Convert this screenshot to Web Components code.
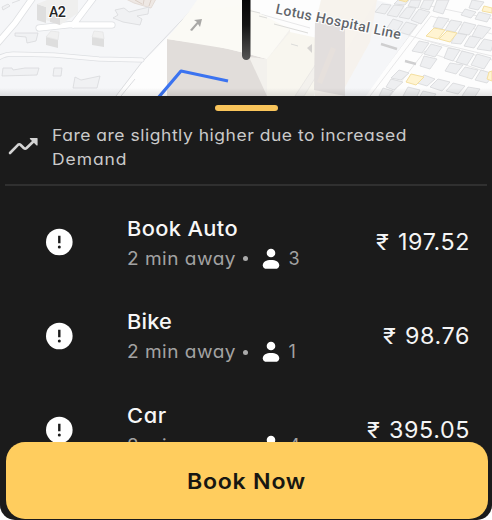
<!DOCTYPE html>
<html lang="en"><head><meta charset="utf-8"><title>Book a ride</title>
<style>html,body{margin:0;background:#fff}body{width:492px;height:520px;overflow:hidden;font-family:Inter,"Open Sans",sans-serif;font-feature-settings:"cv11"}</style></head>
<body><ride-app></ride-app>
<script>
const define=(name,html,init)=>customElements.define(name,class extends HTMLElement{
  connectedCallback(){
    if(this.shadowRoot)return;
    const t=document.createElement('template');t.innerHTML=html;
    this.attachShadow({mode:'open'}).append(t.content.cloneNode(true));
    if(init)init(this,this.shadowRoot);
  }
});

/* Slightly widened text whose tracking is set so that the line is `w` pixels wide */
const STRETCH=1.06;
function fit(h){
  const s=h.shadowRoot.querySelector('span'),w=+h.getAttribute('w'),n=h.textContent.length;
  const k=+(h.getAttribute('stretch')||STRETCH);
  s.style.transform='none';s.style.letterSpacing='0px';
  s.style.letterSpacing=((w/k-s.getBoundingClientRect().width)/n)+'px';
  s.style.transform='scaleX('+k+')';
  h.style.width=w+'px';
}
define('fit-text',`<style>:host{display:block;white-space:nowrap}span{display:inline-block;transform-origin:0 50%}</style><span><slot></slot></span>`,h=>fit(h));

define('ride-map',`<style>:host{display:block;height:96px;overflow:hidden}svg{display:block}text{font-family:Roboto,sans-serif}</style>
<svg width="492" height="96" viewBox="0 0 492 96">
<defs>
<linearGradient id="pin" x1="0" x2="0" y1="0" y2="1"><stop offset="0" stop-color="#000"/><stop offset=".5" stop-color="#141414"/><stop offset="1" stop-color="#555"/></linearGradient>
<linearGradient id="sh" x1="0" x2="0" y1="0" y2="1"><stop offset="0" stop-color="#000" stop-opacity="0"/><stop offset="1" stop-color="#000" stop-opacity=".1"/></linearGradient>
</defs>
<rect width="492" height="96" fill="#f5f6f8"/>
<path d="M204 0H492V96H116L142 63 204 0Z" fill="#fdfdfd"/>
<path d="M116 96 142 62 201 0" fill="none" stroke="#dcdde0"/>
<path d="M121 96 135 79" stroke="#dcdde0" fill="none"/>
<g fill="none" stroke-linecap="round" stroke-linejoin="round">
<path d="M34-4 15 23-4 45M95-4 73 25M76 24 39 28 M73 25 112 25" stroke="#dddfe2" stroke-width="7"/>
<path d="M34-4 15 23-4 45M95-4 73 25M76 24 39 28 M73 25 112 25" stroke="#fff" stroke-width="5.5"/>
<path d="M-4 60Q3 54 13 54L54 55 99 59 142 60" stroke="#dddfe2" stroke-width="5"/>
<path d="M-4 60Q3 54 13 54L54 55 99 59 142 60" stroke="#fafafb" stroke-width="3.5"/>
</g>
<path d="M37 4 46 7V23L37 20ZM46 37 58 40V48L46 45ZM92 37 104 39V47L92 45Z" fill="#dedede"/>
<path d="M37 4 52 -2 78 0 78 13 60 25 46 20V7Z" fill="#efefee"/>
<path d="M50 12 60 15V25L50 22Z" fill="#dedddd"/>
<path d="M46 37 51 31 59 32 58 40ZM92 37 94 31 103 32 104 39Z" fill="#f0f0f0" stroke="#e0e0e0" stroke-width=".6"/>
<path d="M126-1H156L151 8 134 3Z" fill="#eee8e4" stroke="#e3dbd6"/>
<path d="M135 0 142 4M144 0 143 5M151 0 149 6" stroke="#dbcfc7"/>
<g fill="#f0f1f3" stroke="#d8d9dc" stroke-width=".8">
<path d="M3 68 12 68 13 70 25 68 39 68 37 75 2 76ZM54 68 62 68 61 76 53 76ZM75 77 81 80 100 76 97 88 73 88Z"/>
<path d="M115 10 124 8 129 12 149 7 148 14 137 16 142 19 140 25 123 22 113 18 118 15ZM15 33 38 33 36 41 27 43 26 37 15 36Z"/>
<path d="M2 7 8 4 10 6 3 10ZM12 3 20 0"/>
</g>
<g fill="none" stroke="#e7e7e8"><path d="M205 20 220 10 266 22M253 12 310 28M291 50 319 56M295 96 334 43M364 96 425 15M370 96 431 16"/><path d="M390 96 425 51 492 74M425 40 492 56M404 34 492 60M431 16 492 34M430 6 492 19" /></g>
<path d="M319 96 376 0 425 13 366 96Z" fill="#f5f6f8"/>
<!-- rows of small city blocks -->
<g fill="#eeeff1" stroke="#d7d8db" stroke-width=".8">
<path d="M382 4 391 5 385 14 375 12ZM394 5 404 6 397 17 387 15ZM407 7 416 8 409 19 399 17ZM419 9 430 12 421 24 411 20ZM393 19 403 22 397 31 387 28ZM406 22 417 25 409 35 399 32Z"/>
<path d="M398 0 409 0 405 5 394 4ZM411 0 421 0 418 8 408 6ZM424 0 434 0 429 10 420 8ZM437 0 449 0 443 14 433 11Z"/>
<path d="M438 17 449 19 442 29 433 27ZM451 20 462 22 455 32 445 30ZM464 22 476 25 469 35 458 33ZM478 25 491 28 482 39 472 36Z"/>
<path d="M456 33 467 35 461 44 451 43ZM470 36 481 38 474 48 464 46ZM484 39 494 41 491 51 477 49Z"/>
<path d="M472 0 484 2 478 10 469 8ZM465 9 476 12 471 18 461 15ZM479 12 491 15 487 22 475 19Z"/>
<path d="M419 41 429 43 422 53 412 51ZM431 44 442 47 435 57 424 54ZM448 48 460 50 453 61 444 58ZM462 51 474 54 467 65 456 62ZM477 54 491 58 484 69 471 65ZM424 56 437 59 430 69 420 66ZM450 63 463 65 456 74 445 71ZM465 67 478 70 472 79 459 75ZM481 70 494 74 487 83 475 80Z"/>
<path d="M399 70 409 73 401 80 391 78ZM391 79 403 82 394 90 386 87ZM424 75 435 79 427 86 417 83ZM438 79 450 82 442 91 430 87ZM453 83 465 86 458 94 446 91ZM468 87 480 89 474 98 462 96ZM383 88 393 91 389 96 379 96ZM408 87 420 90 416 98 403 96ZM423 91 436 94 433 98 419 98Z"/>
</g>
<g fill="#fff4d2" stroke="#f4dfa0" stroke-width="1"><path d="M434 28 445 30 438 39 426 36ZM447 31 457 33 450 42 439 39ZM411 74 424 77 416 85 406 82ZM484 6 492 8V13L482 11ZM489 72 492 71V81L487 79ZM399 0 408 0 406 2Z"/></g>
<path d="M188 13 197 0H243V53L207 45 167 39Z" fill="#fbfaf6"/>
<path d="M167 39 211 45 249 54 267 59V96H167Z" fill="#e1ddda"/>
<path d="M167 39 188 13 243 5 290 29 267 59 229 49Z" fill="#fbfaf5"/>
<path d="M249 57 267 59 290 29V82L281 96H267Z" fill="#f3f1ed"/>
<path d="M267 59 290 32 331 41 314 96H267Z" fill="#f8f6ef"/>
<path d="M295 96 329 44 335 46 304 96Z" fill="#f3f1ed" stroke="#e3e0df" stroke-width=".6"/>
<path d="M321 0 377 0 370 42 340 96H315V24Z" fill="#f6f1eb" opacity=".88"/>
<path d="M315 20 345 27V96L314 90Z" fill="#dfdcdb" opacity=".92"/>
<path d="M317 82 331 47 336 49 322 84Z" fill="#e6e0dc"/>
<path d="M247 10 260 13M259 16 267 18M274 24 308 33M291 44 298 46" fill="none" stroke="#dcdcda"/>
<path d="M307 48 312 44 312 53Z" fill="#d5d3d1"/>
<path d="M381 44 397 49M405 61 416 64" stroke="#cfcfd0" stroke-width="2.4"/>
<path d="M190 30 197 22 194 20 202 19 200 27 198 24 192 31Z" fill="#a9a8a6"/>
<path d="M158 98 181 71 228 81" fill="none" stroke="#3b73f0" stroke-width="3.2" stroke-linejoin="round"/>
<text x="49" y="16.5" font-size="14.3" font-weight="500" textLength="17" fill="#252525" stroke="#fff" stroke-width="2" paint-order="stroke">A2</text>
<text transform="translate(275 13.3) rotate(11.7)" font-size="14" font-weight="500" textLength="127.5" fill="#62666b" stroke="#fff" stroke-width="2" paint-order="stroke">Lotus Hospital Line</text>
<rect x="242" y="-10" width="8.5" height="70" rx="4.2" fill="url(#pin)"/>
<rect y="88" width="492" height="8" fill="url(#sh)"/>
</svg>`);

define('trend-icon',`<style>:host{display:block}svg{display:block}</style><svg width="32" height="20" viewBox="0 0 32 20" fill="none" stroke="#d4d4d4" stroke-width="2.6" stroke-linecap="round" stroke-linejoin="round"><path d="M3 17 11 8.8Q12.3 7.6 13.7 9L17 12.2Q18.2 13.2 19.6 12L28.5 3.5"/><path d="M23.4 2.6H30V9Z" fill="#d4d4d4" stroke-width="1.2"/></svg>`);

define('fare-notice',`<style>:host{display:flex;box-sizing:border-box;height:90px;margin:0 5px;padding:28px 0 0 2px;border-bottom:2px solid #303030;color:#cacaca;font-size:16.5px;line-height:23.8px}trend-icon{margin:12px 13px 0 0}</style>
<trend-icon></trend-icon><div><fit-text w="355">Fare are slightly higher due to increased</fit-text><fit-text w="75.5">Demand</fit-text></div>`);

define('alert-icon',`<style>:host{display:block}svg{display:block}</style><svg width="28" height="28"><circle cx="14.3" cy="14" r="13.3" fill="#fff"/><path d="M14.3 7.7V15.3" stroke="#1b1b1b" stroke-width="2.4"/><circle cx="14.3" cy="18.9" r="1.5" fill="#1b1b1b"/></svg>`);
define('person-icon',`<style>:host{display:block}svg{display:block}</style><svg width="18" height="22" fill="#fff"><circle cx="9" cy="5" r="4.3"/><path d="M.8 17.2C.8 13.7 4.4 11.9 9 11.9S17.2 13.7 17.2 17.2C17.2 20 15.4 20.8 13.3 20.8H4.7C2.6 20.8.8 20 .8 17.2Z"/></svg>`);

define('ride-option',`<style>
:host{display:flex;align-items:flex-start;height:93.8px;padding:0 22px 0 45px}
alert-icon{margin-top:13.6px;width:28px}
.info{margin-left:53.5px;flex:1;padding-top:1px}
.name{color:#f7f7f7;font-size:20.6px;line-height:26px;font-weight:500}
.meta{display:flex;align-items:center;color:#a2a2a2;font-size:18px;line-height:24px;margin-top:5px}
.dot{width:5px;height:5px;border-radius:50%;background:#aaa;margin:0 13.5px 0 7.5px}
person-icon{margin-right:9px}
.price{display:flex;color:#f5f5f5;font-size:22.8px;line-height:30px;margin-top:12.5px}
.rupee{font-size:22px;width:22px;line-height:31px}
</style><alert-icon></alert-icon><div class="info"><div class="name"></div><div class="meta"><fit-text w="109">2 min away</fit-text><span class="dot"></span><person-icon></person-icon><span class="seats"></span></div></div><div class="price"><span class="rupee"><fit-text w="15" stretch="1.08">₹</fit-text></span><span class="amount"></span></div>`,(h,r)=>{
 r.querySelector('.name').innerHTML='<fit-text w="'+h.getAttribute('name-width')+'">'+h.getAttribute('name')+'</fit-text>';
 r.querySelector('.amount').innerHTML='<fit-text stretch="1.02" w="'+h.getAttribute('price-width')+'">'+h.getAttribute('price')+'</fit-text>';
 r.querySelector('.seats').textContent=h.getAttribute('seats');
});

define('book-button',`<style>:host{display:block}button{all:unset;box-sizing:border-box;display:flex;justify-content:center;align-items:center;width:100%;height:77px;background:#ffcd5e;border-radius:19px;color:#181712;font-weight:600;font-size:21.8px;cursor:pointer}</style><button><fit-text w="119"></fit-text></button>`,(h,r)=>{
 const f=r.querySelector('fit-text');f.textContent=h.textContent;fit(f);
});

define('ride-sheet',`<style>
:host{display:block;position:relative;height:424px;background:#1b1b1b;border-radius:0 0 15px 15px;overflow:hidden}
.handle{position:absolute;left:215px;top:9px;width:63px;height:5.5px;border-radius:3px;background:#f9c45a}
.list{padding-top:28.5px}
book-button{position:absolute;left:5.6px;right:4.4px;bottom:1px}
</style><div class="handle"></div><fare-notice></fare-notice><div class="list">
<ride-option name="Book Auto" name-width="111" price="197.52" price-width="72" seats="3"></ride-option>
<ride-option name="Bike" name-width="45" price="98.76" price-width="65" seats="1"></ride-option>
<ride-option name="Car" name-width="40" price="395.05" price-width="81" seats="4"></ride-option>
</div><book-button>Book Now</book-button>`);

define('ride-app',`<style>:host{display:block;width:492px;height:520px}</style><ride-map></ride-map><ride-sheet></ride-sheet>`);
</script></body></html>
